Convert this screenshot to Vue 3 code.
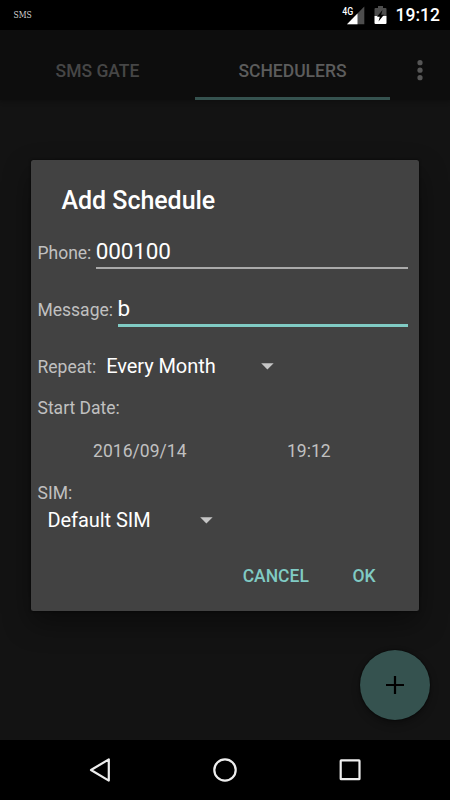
<script setup>
import { ref } from 'vue'

const tabs = ref([
  { label: 'SMS GATE', active: false },
  { label: 'SCHEDULERS', active: true },
])
const fields = ref([
  { label: 'Phone:', value: '000100', focused: false },
  { label: 'Message:', value: 'b', focused: true },
])
</script>

<template>
  <div class="screen">
    <header class="status">
      <span class="notif">SMS</span>
      <div class="status-icons">
        <svg class="signal" width="24" height="20" viewBox="0 0 24 20">
          <path d="M22.3 1.5V19.3H5Z" fill="#4d4d4d" />
          <path d="M15.5 8.5V19.3H5Z" fill="#fff" />
          <text x="0.2" y="9.6" class="network" textLength="11" lengthAdjust="spacingAndGlyphs">4G</text>
        </svg>
        <svg class="battery" width="13" height="18" viewBox="0 0 13 18">
          <path d="M1.5 2H4V0H9V2H11.5Q12.5 2 12.5 3V10H.5V3Q.5 2 1.5 2Z" fill="#4d4d4d" />
          <path d="M.5 10H12.5V17Q12.5 18 11.5 18H1.5Q.5 18 .5 17Z" fill="#fff" />
          <path d="M8.5 4L3 10.7H5.8L4.5 15.5L10 8.8H7.2Z" fill="#000" />
        </svg>
        <span class="clock">19:12</span>
      </div>
    </header>

    <nav class="appbar">
      <div v-for="tab in tabs" :key="tab.label" class="tab" :class="{ active: tab.active }">{{ tab.label }}</div>
      <div class="more">
        <svg width="6" height="21" viewBox="0 0 6 21" fill="#565656">
          <circle cx="3" cy="2.7" r="2.6" />
          <circle cx="3" cy="10.2" r="2.6" />
          <circle cx="3" cy="17.7" r="2.6" />
        </svg>
      </div>
    </nav>

    <main class="content">
      <section class="dialog">
        <h1 class="title">Add Schedule</h1>
        <div v-for="field in fields" :key="field.label" class="field">
          <span class="label">{{ field.label }}</span>
          <div class="input" :class="{ focused: field.focused }">{{ field.value }}</div>
        </div>
        <div class="repeat">
          <span class="label">Repeat:</span>
          <span class="choice every">Every Month</span>
          <svg class="caret" width="13" height="7" viewBox="0 0 13 7"><path d="M.2.2H12.6L6.4 6.4Z" /></svg>
        </div>
        <div class="label start">Start Date:</div>
        <div class="moment">
          <span class="date">2016/09/14</span>
          <span>19:12</span>
        </div>
        <div class="label sim-label">SIM:</div>
        <div class="sim">
          <span class="choice default">Default SIM</span>
          <svg class="caret" width="13" height="7" viewBox="0 0 13 7"><path d="M.2.2H12.6L6.4 6.4Z" /></svg>
        </div>
        <div class="actions">
          <span>CANCEL</span>
          <span>OK</span>
        </div>
      </section>
      <div class="fab">
        <svg width="18" height="18" viewBox="0 0 18 18"><path d="M9 0V18M0 9H18" stroke="#000" stroke-width="2.2" /></svg>
      </div>
    </main>

    <footer class="navbar">
      <svg width="24" height="26" viewBox="0 0 24 26"><path d="M19.8 2.4V23.6L2 13Z" /></svg>
      <svg width="26" height="26" viewBox="0 0 26 26"><circle cx="13" cy="13" r="10.7" /></svg>
      <svg width="24" height="26" viewBox="0 0 24 26"><rect x="2.7" y="3.4" width="18.8" height="18.8" rx=".5" /></svg>
    </footer>
  </div>
</template>

<style>
body {
  margin: 0;
  background: #131313;
}
</style>

<style scoped>
.screen {
  width: 450px;
  height: 800px;
  display: flex;
  flex-direction: column;
  overflow: hidden;
  background: #131313;
  font-family: Roboto, sans-serif;
}
.status {
  height: 30px;
  flex: none;
  display: flex;
  justify-content: space-between;
  align-items: center;
  background: #000;
  box-sizing: border-box;
  padding: 0 10px 0 13.5px;
}
.notif {
  font: 8.5px/30px "DejaVu Serif Condensed", "DejaVu Serif", serif;
  font-stretch: condensed;
  color: #d4d4d4;
}
.status-icons {
  display: flex;
  align-items: center;
}
.network {
  font: 500 11px Roboto, sans-serif;
  fill: #fff;
}
.signal {
  margin-top: -1px;
}
.battery {
  margin-left: 8px;
}
.clock {
  margin-left: 9px;
  font-size: 17.5px;
  font-weight: 500;
  line-height: 31px;
  color: #fff;
}
.appbar {
  height: 70px;
  flex: none;
  display: flex;
  background: #0d0d0d;
  box-shadow: 0 2px 4px rgba(0, 0, 0, 0.25);
}
.tab {
  width: 195px;
  box-sizing: border-box;
  padding-top: 5px;
  line-height: 72px;
  text-align: center;
  font-size: 17.5px;
  font-weight: 500;
  color: #464646;
  border-bottom: 3px solid transparent;
}
.tab.active {
  color: #5c5c5c;
  border-bottom-color: #35524f;
}
.more {
  flex: 1;
  display: flex;
  align-items: center;
  justify-content: center;
  padding-top: 10px;
}
.content {
  flex: 1;
  display: flex;
  flex-direction: column;
  padding-top: 59.5px;
}
.dialog {
  width: 388px;
  height: 451px;
  flex: none;
  box-sizing: border-box;
  margin-left: 31px;
  padding: 0.5px 11.5px 0 6.5px;
  background: #424242;
  border-radius: 2.5px;
  box-shadow: 0 12px 28px rgba(0, 0, 0, 0.4), 0 0 3px rgba(0, 0, 0, 0.7);
}
.title {
  margin: 0;
  padding: 17px 0 0 24px;
  font-size: 25px;
  line-height: 48px;
  font-weight: 500;
  letter-spacing: -0.04px;
  color: #fff;
}
.field {
  height: 57px;
  display: flex;
  align-items: baseline;
}
.label {
  font-size: 17.5px;
  color: #c0c0c0;
}
.input {
  flex: 1;
  height: 44px;
  box-sizing: border-box;
  margin-left: 4.5px;
  line-height: 53px;
  font-size: 22.5px;
  letter-spacing: -0.15px;
  color: #fff;
  border-bottom: 2px solid #aaa;
}
.input.focused {
  height: 45px;
  line-height: 52px;
  border-bottom: 3px solid #80cbc4;
}
.repeat {
  height: 56px;
  display: flex;
  align-items: center;
  margin-top: -1px;
}
.repeat .label {
  padding-top: 1px;
}
.choice {
  font-size: 20px;
  letter-spacing: -0.06px;
  color: #fff;
}
.every {
  width: 155px;
  margin-left: 10px;
}
.caret {
  fill: #c6c6c6;
}
.start {
  line-height: 28px;
}
.moment {
  height: 56px;
  display: flex;
  align-items: center;
  padding: 1px 0 0 55.5px;
  font-size: 17.5px;
  color: #c0c0c0;
}
.date {
  width: 194px;
  letter-spacing: 0.05px;
}
.sim-label {
  line-height: 28px;
}
.sim {
  height: 26px;
  display: flex;
  align-items: center;
  padding-left: 10px;
}
.default {
  width: 152.5px;
}
.actions {
  height: 86px;
  display: flex;
  justify-content: flex-end;
  align-items: center;
  gap: 43.5px;
  padding-right: 32px;
  font-size: 17.5px;
  font-weight: 500;
  color: #80cbc4;
}
.fab {
  width: 70px;
  height: 70px;
  display: flex;
  align-items: center;
  justify-content: center;
  margin: 39.5px 20px 0 auto;
  border-radius: 50%;
  background: #35524f;
  box-shadow: 0 4px 8px rgba(0, 0, 0, 0.3), 0 0 2px #000;
}
.navbar {
  height: 60px;
  flex: none;
  display: flex;
  align-items: center;
  justify-content: space-between;
  background: #000;
  box-sizing: border-box;
  padding: 0 88px;
}
.navbar svg {
  fill: none;
  stroke: #eee;
  stroke-width: 2.2;
  stroke-linejoin: round;
}
.navbar svg:first-child path {
  transform: translateX(1px);
}
</style>
